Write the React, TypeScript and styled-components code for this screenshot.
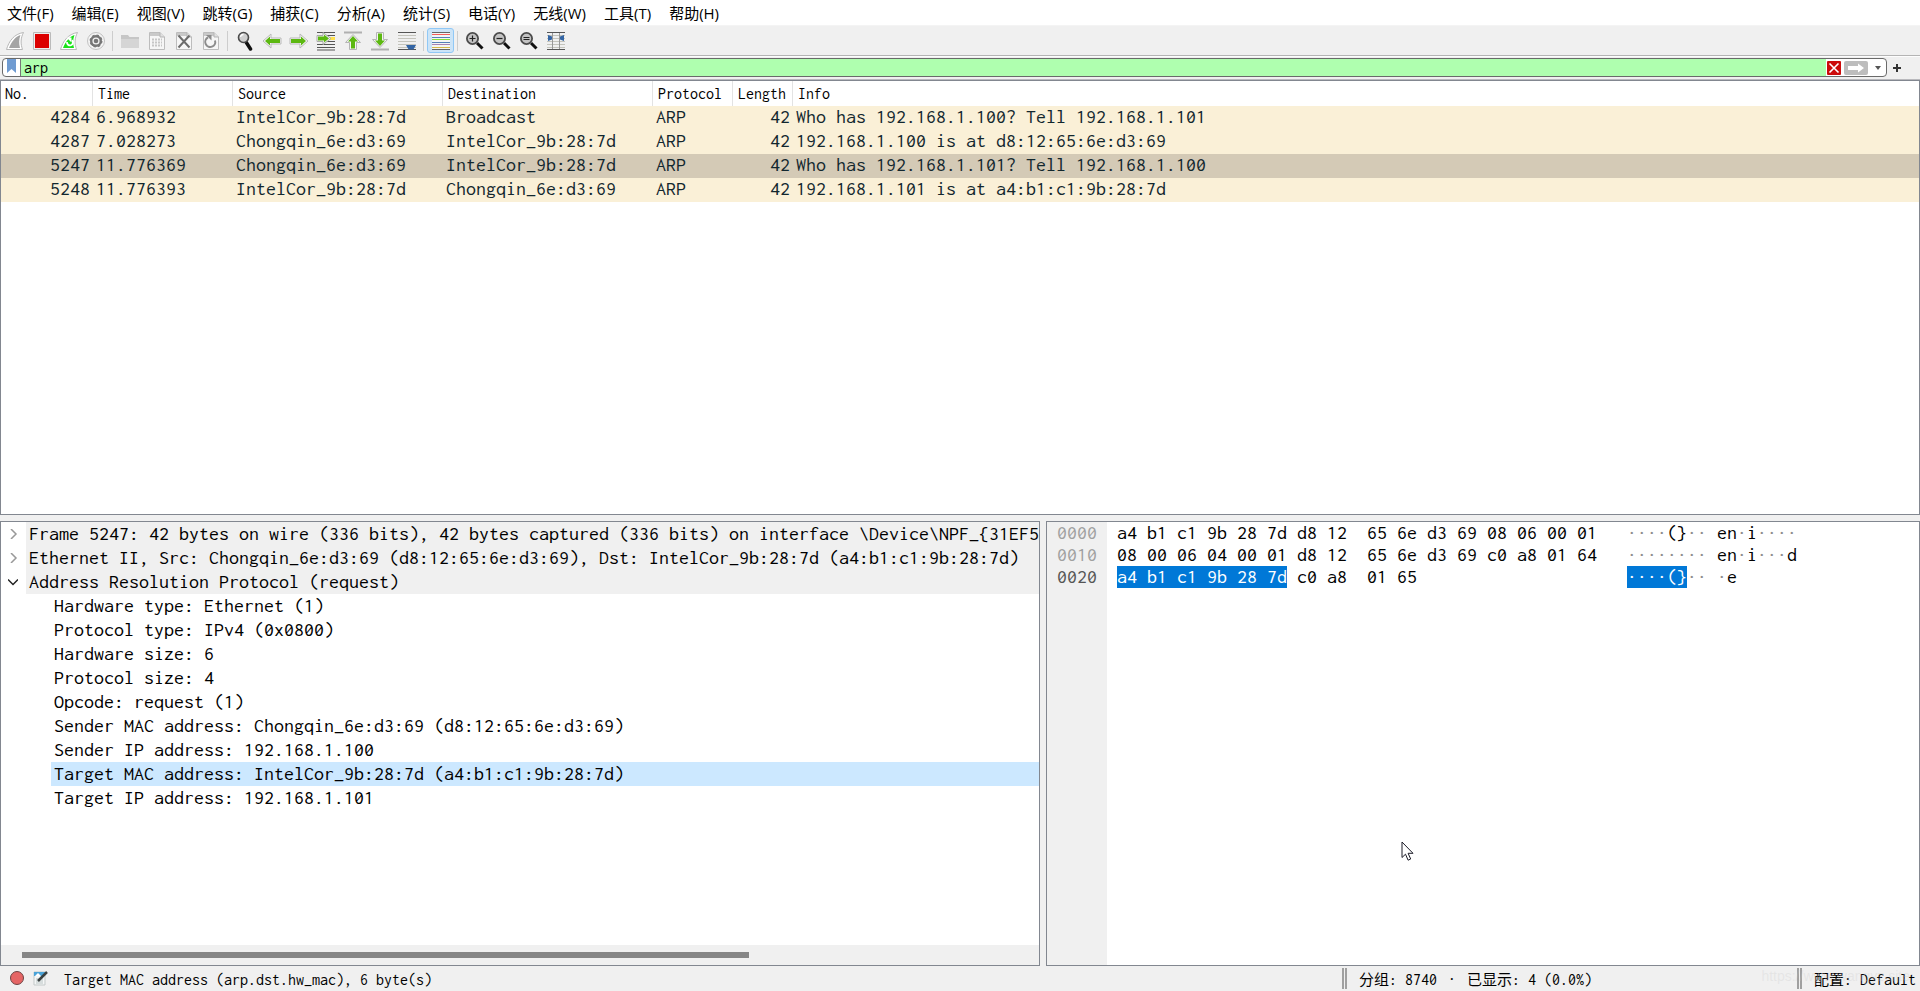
import React from "react";
import styled, { createGlobalStyle } from "styled-components";

const mono = `Inconsolata, "Noto Sans Mono CJK SC", "Liberation Mono", monospace`;
const ui = `"Open Sans", "Noto Sans CJK SC", sans-serif`;
const edge = "#828790";

const Global = createGlobalStyle`
  * { box-sizing: border-box; }
  html, body { margin: 0; background: #f0f0f0; }
  body { font: 16px ${mono}; color: #000; }
  button { border: 0; padding: 0; background: none; font: inherit; color: inherit; }
`;

const Window = styled.div`
  display: flex;
  flex-direction: column;
  height: 100vh;
  overflow: hidden;
`;

/* Menu */
const MenuBar = styled.nav`
  display: flex;
  gap: 18px;
  height: 26px;
  padding: 0 7px;
  background: #fff;
  border-bottom: 1px solid #f4f4f4;
`;
const MenuItem = styled.button`
  font: 15px/24px ${ui};
  white-space: nowrap;
`;

/* Toolbar */
const ToolBar = styled.div`
  display: flex;
  align-items: center;
  height: 30px;
  padding: 0 1px;
  border-bottom: 1px solid #b4b4b4;
`;
const Tool = styled.button<{ $on?: boolean }>`
  display: flex;
  align-items: center;
  justify-content: center;
  width: 27px;
  height: 25px;
  border: 1px solid ${(p) => (p.$on ? "#90c8f6" : "transparent")};
  border-radius: 3px;
  background: ${(p) => (p.$on ? "#cce4f7" : "transparent")};
`;
const ToolGap = styled.span`
  width: 7px;
  height: 20px;
  background: linear-gradient(#cdcdcd, #cdcdcd) 3px 0 / 1px 100% no-repeat;
`;

/* Display filter */
const FilterBar = styled.form`
  display: flex;
  align-items: center;
  gap: 4px;
  height: 24px;
  padding: 1px 15px 2px 2px;
  border-top: 1px solid #fdfdfd;
  border-bottom: 1px solid #b9b9bd;
`;
const FilterBox = styled.div`
  flex: 1;
  display: flex;
  align-items: center;
  height: 19px;
  border: 1px solid #6a6a6a;
  border-radius: 4px;
  background: #fff;
  overflow: hidden;
`;
const Bookmark = styled.button`
  display: flex;
  justify-content: center;
  width: 18px;
  height: 17px;
  border-right: 1px solid #777;
`;
const FilterInput = styled.input`
  flex: 1;
  min-width: 0;
  height: 17px;
  border: 0;
  padding: 0 3px;
  outline: 0;
  background: #afffaf;
  color: #000;
  font: 16px/17px ${mono};
`;
const FilterButton = styled.button<{ $w: number }>`
  display: flex;
  align-items: center;
  justify-content: center;
  width: ${(p) => p.$w}px;
  height: 17px;
`;
const AddFilter = styled.button`
  display: flex;
  align-items: center;
  width: 14px;
  height: 19px;
  padding: 0 2px;
`;

/* Panels */
const Panel = styled.section`
  position: relative;
  min-width: 0;
  min-height: 0;
  border: 1px solid ${edge};
  background: #fff;
  overflow: hidden;
`;
const PacketPanel = styled(Panel)`
  flex: 433 1 0;
`;
const Details = styled.div`
  flex: 445 1 0;
  min-height: 0;
  display: grid;
  grid-template-columns: 1040fr 874fr;
  grid-template-rows: 100%;
  column-gap: 6px;
  margin-top: 6px;
`;

const PacketTable = styled.table`
  width: 100%;
  table-layout: fixed;
  border-collapse: separate;
  border-spacing: 0;
`;
const Col = styled.col<{ $w?: number }>`
  width: ${(p) => (p.$w ? `${p.$w}px` : "auto")};
`;
const HeadCell = styled.th`
  height: 25px;
  padding: 1px 0 0 5px;
  border-right: 1px solid #e3e3e3;
  font-weight: 400;
  font-size: 16px;
  line-height: 20px;
  text-align: left;
  white-space: nowrap;
  &:first-child { padding-left: 4px; }
  &:last-child { border-right: 0; }
`;
const PacketRow = styled.tr<{ $selected?: boolean }>`
  background: ${(p) => (p.$selected ? "#d4cab6" : "#faf0d7")};
  color: #12272e;
`;
const Cell = styled.td<{ $right?: boolean }>`
  height: 24px;
  padding: 0 3px 2px;
  font-size: 20px;
  line-height: 22px;
  text-align: ${(p) => (p.$right ? "right" : "left")};
  white-space: nowrap;
`;

/* Protocol tree */
const TreePanel = styled(Panel)`
  display: flex;
  flex-direction: column;
`;
const Tree = styled.ul`
  flex: 1;
  min-height: 0;
  margin: 0;
  padding: 0;
  list-style: none;
  overflow: hidden;
`;
const TreeRow = styled.li<{ $child?: boolean }>`
  display: flex;
  height: 24px;
  padding-left: ${(p) => (p.$child ? 50 : 0)}px;
  font-size: 20px;
  line-height: 24px;
  white-space: pre;
`;
const Twisty = styled.button`
  display: flex;
  flex: none;
  align-items: center;
  justify-content: center;
  width: 25px;
  height: 24px;
  padding-right: 2px;
`;
const TreeLabel = styled.span<{ $bg?: string }>`
  flex: 1;
  padding-left: 3px;
  background: ${(p) => p.$bg || "transparent"};
`;
const ScrollTrack = styled.div`
  flex: none;
  height: 20px;
  padding: 7px 21px;
  background: #f0f0f0;
`;
const ScrollThumb = styled.div`
  width: 73%;
  height: 6px;
  background: #868686;
`;

/* Bytes */
const HexPanel = styled(Panel)`
  display: flex;
`;
const Gutter = styled.div`
  width: 60px;
  padding-left: 10px;
  background: #f0f0f0;
`;
const HexLine = styled.div<{ $tone?: string }>`
  height: 22px;
  font-size: 20px;
  line-height: 22px;
  white-space: pre;
  color: ${(p) => p.$tone || "#000"};
`;
const HexBody = styled.div`
  padding-left: 10px;
`;
const Mark = styled.span`
  display: inline-block;
  height: 22px;
  background: #0078d7;
  color: #fff;
`;
const Dot = styled.span`
  color: #8c8c8c;
`;
const Pointer = styled.svg`
  position: absolute;
  left: 354px;
  top: 319px;
`;

/* Status bar */
const StatusBar = styled.footer`
  position: relative;
  display: flex;
  align-items: center;
  height: 25px;
  padding-left: 7px;
  line-height: 20px;
  white-space: pre;
`;
const StatusButton = styled.button<{ $w: number }>`
  display: flex;
  width: ${(p) => p.$w}px;
`;
const StatusField = styled.span`
  flex: 1;
  padding: 2px 0 0 4px;
`;
const StatusGroup = styled.span<{ $w: number }>`
  display: flex;
  align-items: center;
  gap: 11px;
  width: ${(p) => p.$w}px;
  height: 21px;
  padding: 2px 0 0 12px;
  border-left: 5px double #a0a0a0;
`;
const Han = styled.span`
  font-size: 15px;
`;
const Watermark = styled.span`
  position: absolute;
  right: 10px;
  top: 0;
  color: rgba(200, 200, 200, 0.28);
  font: 14px/20px "Liberation Sans", sans-serif;
  pointer-events: none;
`;

const Svg = ({ children }: { children: React.ReactNode }) => (
  <svg width="20" height="20" viewBox="0 0 20 20" fill="none" aria-hidden="true">
    {children}
  </svg>
);

const FinPath = "M1.500 18.500C4 10 9 3 18.500 1.500C15.500 7 15.500 13 17.500 18.500Z";
const Fin = ({ color, restart }: { color: string; restart?: boolean }) => (
  <Svg>
    <path d={FinPath} fill="#fff" stroke="#b8b8b8" />
    <path d="M4 17C6.500 10.500 10.500 5.500 15.500 4C13.800 8 13.800 13 15 17Z" fill={color} />
    {restart && (
      <>
        <path d="M8 11a3 3 0 1 0 5-1.800" stroke="#fff" strokeWidth="1.800" />
        <path d="M7.500 6.500h5v5z" fill="#fff" />
      </>
    )}
  </Svg>
);

const Sheet = ({ children }: { children: React.ReactNode }) => (
  <Svg>
    <path d="M2.500 1.500h10.500l4.500 4.500v12.500h-15z" fill="#f6f6f6" stroke="#bdbdbd" />
    <path d="M3 2h10l1 3H3z" fill="#c9c9c9" />
    <path d="M13 1.500V6h4.500" fill="#e0e0e0" stroke="#b5b5b5" />
    {children}
  </Svg>
);

const Arrow = ({ turn = 0 }: { turn?: number }) => (
  <g transform={`rotate(${turn} 10 10)`}>
    <path d="M1 10l8-7v4h10v6H9v4z" fill="#f4f4f4" stroke="#b9b9b9" />
    <path d="M3 10l5-4.600V8h10v4H8v2.600z" fill="#5cb811" />
  </g>
);

const Magnifier = ({ sign }: { sign: "plus" | "minus" | "equal" }) => (
  <Svg>
    <path d="M12 12l5.500 5.500" stroke="#111" strokeWidth="3" />
    <circle cx="7.500" cy="7.500" r="5.600" fill="#c3c3c3" stroke="#4b4b4b" strokeWidth="1.800" />
    {sign === "plus" && <path d="M7.500 4.500v6M4.500 7.500h6" stroke="#222" strokeWidth="1.200" />}
    {sign === "minus" && <path d="M4.500 7.500h6" stroke="#222" strokeWidth="1.200" />}
    {sign === "equal" && <path d="M4.500 6.500h6M4.500 8.500h6" stroke="#222" />}
  </Svg>
);

const Lines = () => (
  <>
    {[4, 7, 10, 13, 16].map((y) => (
      <path key={y} d={`M1 ${y}.500h18`} stroke="#c4c4bc" />
    ))}
  </>
);

const stripes: [number, string][] = [
  [1.5, "#666"],
  [3.5, "#f25c5c"],
  [6.5, "#5580b8"],
  [8.5, "#86dc3a"],
  [11.5, "#5580b8"],
  [13.5, "#a583b5"],
  [16.5, "#d5b84a"],
  [18.5, "#666"],
];

const tools: (null | { label: string; icon: React.ReactNode; on?: boolean })[] = [
  { label: "开始捕获分组", icon: <Fin color="#a4a4a4" /> },
  {
    label: "停止捕获分组",
    icon: (
      <Svg>
        <path d="M1.500 1.500h17v17h-17z" fill="#eee" stroke="#bbb" />
        <path d="M3 3h14v14H3z" fill="#dc0000" />
      </Svg>
    ),
  },
  { label: "重新开始当前捕获", icon: <Fin color="#18e218" restart /> },
  {
    label: "捕获选项",
    icon: (
      <Svg>
        <circle cx="10" cy="10" r="8.500" fill="#f4f4f4" stroke="#c2c2c2" />
        <circle cx="10" cy="10" r="6" fill="#777" />
        <circle cx="10" cy="10" r="5.500" stroke="#777" strokeWidth="2" strokeDasharray="2.300 2" />
        <circle cx="10" cy="10" r="3.600" fill="#f2f2f2" />
        <circle cx="10" cy="10" r="2.300" fill="#777" />
      </Svg>
    ),
  },
  null,
  {
    label: "打开",
    icon: (
      <Svg>
        <path d="M1 4h7l1.500 2H19v11H1z" fill="#c6c6c6" />
        <path d="M1 8h18v9H1z" fill="#d5d5d5" />
      </Svg>
    ),
  },
  {
    label: "保存",
    icon: (
      <Sheet>
        <path d="M5 8.500h10M5 11.500h10M5 14.500h10" stroke="#c6c6c6" strokeWidth="2" strokeDasharray="2 1" />
      </Sheet>
    ),
  },
  {
    label: "关闭",
    icon: (
      <Sheet>
        <path d="M4.500 4.500l11 12M15.500 4.500l-11 12" stroke="#6c6c6c" strokeWidth="2" />
      </Sheet>
    ),
  },
  {
    label: "重新加载",
    icon: (
      <Sheet>
        <path d="M7 6.500a5 5 0 1 0 7 3" stroke="#8c8c8c" strokeWidth="2" />
        <path d="M5 4h5.500v5.500z" fill="#8c8c8c" />
      </Sheet>
    ),
  },
  null,
  {
    label: "查找分组",
    icon: (
      <Svg>
        <path d="M11 11l4.500 7" stroke="#111" strokeWidth="3.500" strokeLinecap="round" />
        <circle cx="8.500" cy="6.500" r="5" fill="#cfcfcf" stroke="#4b4b4b" strokeWidth="1.600" />
        <path d="M5.500 6a3 3 0 0 1 3-2.500" stroke="#fff" strokeWidth="1.300" />
      </Svg>
    ),
  },
  { label: "前一个分组", icon: <Svg><Arrow /></Svg> },
  { label: "后一个分组", icon: <Svg><Arrow turn={180} /></Svg> },
  {
    label: "转到分组",
    icon: (
      <Svg>
        <path d="M1 1.500h18M7 4.500h12M7 10.500h12M1 13.500h18M1 16.500h18M1 19h18" stroke="#555" />
        <path d="M12 6h7v3h-7z" fill="#ffe14d" />
        <path d="M1 4.500h6V1.500l8 6-8 6v-3H1z" fill="#f4f4f4" stroke="#aaa" />
        <path d="M2 5.500h6V3.500l5 4-5 4v-2H2z" fill="#5cb811" />
      </Svg>
    ),
  },
  {
    label: "首个分组",
    icon: (
      <Svg>
        <path d="M1 1.500h18" stroke="#b0b0b0" strokeWidth="2" />
        <path d="M10 3.500l7.500 8h-4V18.500h-7v-7h-4z" fill="#f4f4f4" stroke="#b5b5b5" />
        <path d="M10 5l5 5.500h-3V17.500H8v-7H5z" fill="#5cb811" />
      </Svg>
    ),
  },
  {
    label: "最新分组",
    icon: (
      <Svg>
        <path d="M1 18.500h18" stroke="#b0b0b0" strokeWidth="2" />
        <path d="M10 16.500l7.500-8h-4V1.500h-7v7h-4z" fill="#f4f4f4" stroke="#b5b5b5" />
        <path d="M10 15l5-5.500h-3V2.500H8v7H5z" fill="#5cb811" />
      </Svg>
    ),
  },
  {
    label: "自动滚屏",
    icon: (
      <Svg>
        <Lines />
        <path d="M1 1.500h18M1 18.500h18" stroke="#555" />
        <path d="M9 14h10l-2.500 4.500h-5z" fill="#3465a4" />
      </Svg>
    ),
  },
  null,
  {
    label: "着色",
    on: true,
    icon: (
      <Svg>
        <path d="M1 1h18v18H1z" fill="#f3f5f5" />
        {stripes.map(([y, c]) => (
          <path key={y} d={`M1 ${y}h18`} stroke={c} />
        ))}
      </Svg>
    ),
  },
  null,
  { label: "放大", icon: <Magnifier sign="plus" /> },
  { label: "缩小", icon: <Magnifier sign="minus" /> },
  { label: "普通大小", icon: <Magnifier sign="equal" /> },
  {
    label: "调整列宽",
    icon: (
      <Svg>
        <Lines />
        <path d="M1 1.500h18M1 18.500h18" stroke="#555" />
        <path d="M6.500 2v16M13.500 2v16" stroke="#999" />
        <path d="M2 4l4 1.500v3L2 10zM18 4l-4 1.500v3l4 1.500z" fill="#3465a4" />
      </Svg>
    ),
  },
];

const menus = [
  "文件(F)", "编辑(E)", "视图(V)", "跳转(G)", "捕获(C)", "分析(A)",
  "统计(S)", "电话(Y)", "无线(W)", "工具(T)", "帮助(H)",
];

const columns: { name: string; width?: number; right?: boolean }[] = [
  { name: "No.", width: 92, right: true },
  { name: "Time", width: 140 },
  { name: "Source", width: 210 },
  { name: "Destination", width: 210 },
  { name: "Protocol", width: 80 },
  { name: "Length", width: 60, right: true },
  { name: "Info" },
];

const packets = [
  ["4284", "6.968932", "IntelCor_9b:28:7d", "Broadcast", "ARP", "42", "Who has 192.168.1.100? Tell 192.168.1.101"],
  ["4287", "7.028273", "Chongqin_6e:d3:69", "IntelCor_9b:28:7d", "ARP", "42", "192.168.1.100 is at d8:12:65:6e:d3:69"],
  ["5247", "11.776369", "Chongqin_6e:d3:69", "IntelCor_9b:28:7d", "ARP", "42", "Who has 192.168.1.101? Tell 192.168.1.100"],
  ["5248", "11.776393", "IntelCor_9b:28:7d", "Chongqin_6e:d3:69", "ARP", "42", "192.168.1.101 is at a4:b1:c1:9b:28:7d"],
];

const layers = [
  { text: "Frame 5247: 42 bytes on wire (336 bits), 42 bytes captured (336 bits) on interface \\Device\\NPF_{31EF5" },
  { text: "Ethernet II, Src: Chongqin_6e:d3:69 (d8:12:65:6e:d3:69), Dst: IntelCor_9b:28:7d (a4:b1:c1:9b:28:7d)" },
  { text: "Address Resolution Protocol (request)", open: true },
];

const fields = [
  "Hardware type: Ethernet (1)",
  "Protocol type: IPv4 (0x0800)",
  "Hardware size: 6",
  "Protocol size: 4",
  "Opcode: request (1)",
  "Sender MAC address: Chongqin_6e:d3:69 (d8:12:65:6e:d3:69)",
  "Sender IP address: 192.168.1.100",
  "Target MAC address: IntelCor_9b:28:7d (a4:b1:c1:9b:28:7d)",
  "Target IP address: 192.168.1.101",
];

/* Non-printable bytes are shown as grey middle dots. */
const Ascii = ({ text }: { text: string }) => (
  <>
    {text.split(/(·+)/).map((part, i) => (part.startsWith("·") ? <Dot key={i}>{part}</Dot> : part))}
  </>
);

export default function App() {
  return (
    <Window>
      <Global />
      <MenuBar>
        {menus.map((m) => (
          <MenuItem key={m}>{m}</MenuItem>
        ))}
      </MenuBar>

      <ToolBar role="toolbar">
        {tools.map((t, i) =>
          t ? (
            <Tool key={i} $on={t.on} aria-label={t.label}>
              {t.icon}
            </Tool>
          ) : (
            <ToolGap key={i} />
          )
        )}
      </ToolBar>

      <FilterBar onSubmit={(e) => e.preventDefault()}>
        <FilterBox>
          <Bookmark type="button" aria-label="书签">
            <svg width="9" height="14" viewBox="0 0 9 14">
              <path d="M0 0h9v14L4.500 10 0 14z" fill="#6f9bd1" />
            </svg>
          </Bookmark>
          <FilterInput aria-label="显示过滤器" defaultValue="arp" spellCheck={false} />
          <FilterButton type="button" $w={16} aria-label="清除">
            <svg width="14" height="14" viewBox="0 0 14 14">
              <rect width="14" height="14" rx="1" fill="#cc0a0a" />
              <path d="M2.500 2.500l9 9M11.500 2.500l-9 9" stroke="#fff" strokeWidth="1.600" />
            </svg>
          </FilterButton>
          <FilterButton type="submit" $w={28} aria-label="应用">
            <svg width="24" height="14" viewBox="0 0 24 14">
              <rect width="24" height="14" rx="2" fill="#bdbdbd" />
              <path d="M4 5h10V2.500l6 4.500-6 4.500V9H4z" fill="#fff" />
            </svg>
          </FilterButton>
          <FilterButton type="button" $w={16} aria-label="历史">
            <svg width="6" height="4" viewBox="0 0 6 4">
              <path d="M0 0h6L3 4z" fill="#555" />
            </svg>
          </FilterButton>
        </FilterBox>
        <AddFilter type="button" aria-label="添加过滤器按钮">
          <svg width="8" height="8" viewBox="0 0 8 8">
            <path d="M4 0v8M0 4h8" stroke="#333" strokeWidth="2" />
          </svg>
        </AddFilter>
      </FilterBar>

      <PacketPanel>
        <PacketTable>
          <colgroup>
            {columns.map((c) => (
              <Col key={c.name} $w={c.width} />
            ))}
          </colgroup>
          <thead>
            <tr>
              {columns.map((c) => (
                <HeadCell key={c.name}>{c.name}</HeadCell>
              ))}
            </tr>
          </thead>
          <tbody>
            {packets.map((p) => (
              <PacketRow key={p[0]} $selected={p[0] === "5247"}>
                {p.map((v, i) => (
                  <Cell key={i} $right={columns[i].right}>
                    {v}
                  </Cell>
                ))}
              </PacketRow>
            ))}
          </tbody>
        </PacketTable>
      </PacketPanel>

      <Details>
        <TreePanel>
          <Tree>
            {layers.map((l) => (
              <TreeRow key={l.text}>
                <Twisty aria-label={l.open ? "折叠" : "展开"}>
                  <svg width="10" height="10" viewBox="0 0 10 10" fill="none" strokeWidth="1.500">
                    {l.open ? (
                      <path d="M0 2.500l5 5 5-5" stroke="#222" />
                    ) : (
                      <path d="M3 0l5 5-5 5" stroke="#999" />
                    )}
                  </svg>
                </Twisty>
                <TreeLabel $bg="#f0f0f0">{l.text}</TreeLabel>
              </TreeRow>
            ))}
            {fields.map((f) => (
              <TreeRow key={f} $child>
                <TreeLabel $bg={f.startsWith("Target MAC") ? "#cce8ff" : undefined}>{f}</TreeLabel>
              </TreeRow>
            ))}
          </Tree>
          <ScrollTrack>
            <ScrollThumb />
          </ScrollTrack>
        </TreePanel>

        <HexPanel>
          <Gutter>
            <HexLine $tone="#a0a0a0">0000</HexLine>
            <HexLine $tone="#a0a0a0">0010</HexLine>
            <HexLine $tone="#555">0020</HexLine>
          </Gutter>
          <HexBody>
            <HexLine>
              {"a4 b1 c1 9b 28 7d d8 12  65 6e d3 69 08 06 00 01   "}
              <Ascii text="····(}·· en·i····" />
            </HexLine>
            <HexLine>
              {"08 00 06 04 00 01 d8 12  65 6e d3 69 c0 a8 01 64   "}
              <Ascii text="········ en·i···d" />
            </HexLine>
            <HexLine>
              <Mark>a4 b1 c1 9b 28 7d</Mark>
              {" c0 a8  01 65".padEnd(34)}
              <Mark>{"····(}"}</Mark>
              <Ascii text="·· ·e" />
            </HexLine>
          </HexBody>
          <Pointer width="14" height="21" viewBox="0 0 14 21" aria-hidden="true">
            <path d="M1 1v15.500l3.500-3.300 2.600 6 2.600-1.200-2.600-5.700H12z" fill="#fff" stroke="#1c1c28" />
          </Pointer>
        </HexPanel>
      </Details>

      <StatusBar>
        <StatusButton $w={26} aria-label="专家信息">
          <svg width="18" height="18" viewBox="0 0 18 18">
            <circle cx="10" cy="8" r="6.500" fill="#e56565" stroke="#6e4444" />
          </svg>
        </StatusButton>
        <StatusButton $w={27} aria-label="捕获文件注释">
          <svg width="16" height="18" viewBox="0 0 16 18">
            <path d="M1 2h11v13H1z" fill="#f4f6f6" stroke="#c3c9c9" />
            <path d="M1 2h11v4H1z" fill="#4aa3d8" />
            <path d="M2 6l3-3 3 3z" fill="#fff" />
            <path d="M3 9h7M3 11h7M3 13h7" stroke="#b9c4c4" />
            <path d="M5 11L14 2" stroke="#3a4040" strokeWidth="2.500" />
          </svg>
        </StatusButton>
        <StatusField>Target MAC address (arp.dst.hw_mac), 6 byte(s)</StatusField>
        <StatusGroup $w={455}>
          <span><Han>分组</Han>: 8740</span>
          <span>·</span>
          <span><Han>已显示</Han>: 4 (0.0%)</span>
        </StatusGroup>
        <StatusGroup $w={123}>
          <span><Han>配置</Han>: Default</span>
        </StatusGroup>
        <Watermark>https://www.wangyz.site</Watermark>
      </StatusBar>
    </Window>
  );
}
